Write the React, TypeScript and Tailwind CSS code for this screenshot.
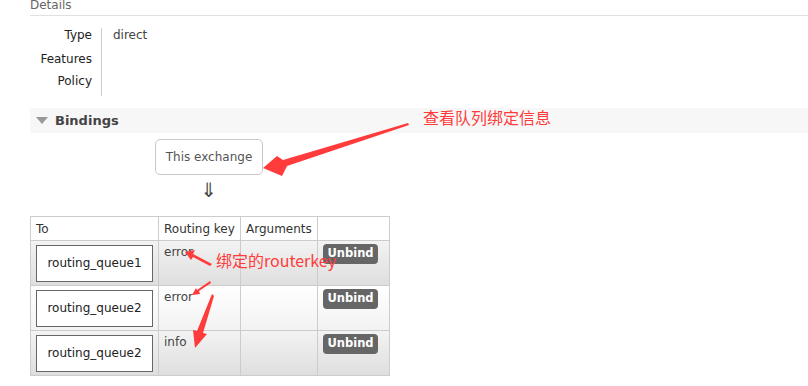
import React from 'react';

const rows = [
  { queue: 'routing_queue1', key: 'error', odd: true },
  { queue: 'routing_queue2', key: 'error', odd: false },
  { queue: 'routing_queue2', key: 'info', odd: true },
];

const Annotations: React.FC = () => (
  <svg className="absolute inset-0 pointer-events-none" width="808" height="386" viewBox="0 0 808 386">
    {/* big arrow to "This exchange" */}
    <polygon
      fill="#ff3b3b"
      points="408,123 409,125 287,166 282,176 263,168 277,156 283,160"
    />
    {/* arrow to first "error" */}
    <polygon fill="#ff3b3b" points="212,264 210,266 193,257 191,260 185,252 195,250 193,254" />
    {/* arrow to second "error" */}
    <polygon fill="#ff3b3b" points="210,281 211,283 199,291 200,294 192,295 196,288 197,290" />
    {/* arrow to "info" */}
    <polygon fill="#ff3b3b" points="212,294 214,296 203,333 207,334 195,348 193,330 197,331" />
    <text x="423" y="124" fill="#ff3b3b" fontSize="16" fontFamily="'Noto Sans CJK SC', sans-serif">
      查看队列绑定信息
    </text>
    <text x="216" y="267" fill="#ff3b3b" fontSize="16" fontFamily="'Noto Sans CJK SC', sans-serif">
      绑定的routerkey
    </text>
  </svg>
);

const App: React.FC = () => {
  return (
    <div className="relative w-[808px] h-[386px] overflow-hidden bg-white text-[12px] text-[#333] font-['DejaVu_Sans',sans-serif]">
      {/* Details header */}
      <div className="ml-[30px] h-[16px] border-b border-[#e0e0e0]">
        <div className="relative -top-[3px] leading-[16px] text-[#666]">Details</div>
      </div>

      {/* Details table */}
      <div className="flex mt-[12px]">
        <div className="w-[92px] text-right text-[#222]">
          <div className="h-[24px] leading-[14px]">Type</div>
          <div className="h-[22px] leading-[14px]">Features</div>
          <div className="h-[22px] leading-[14px]">Policy</div>
        </div>
        <div className="ml-[9px] h-[68px] border-l border-[#ccc] pl-[11px] text-[#444] leading-[14px]">direct</div>
      </div>

      {/* Bindings section bar */}
      <div className="ml-[30px] mt-[12px] h-[25px] bg-[#f7f7f7] flex items-center">
        <div className="ml-[6px] w-0 h-0 border-l-[6px] border-r-[6px] border-t-[7px] border-l-transparent border-r-transparent border-t-[#999]" />
        <span className="ml-[7px] font-bold text-[13px] text-[#444]">Bindings</span>
      </div>

      {/* This exchange */}
      <div className="ml-[155px] mt-[6px] w-[108px] h-[36px] border border-[#c8c8c8] rounded-[5px] flex items-center justify-center text-[#555]">
        This exchange
      </div>
      <div className="ml-[155px] w-[108px] text-center text-[20px] leading-[24px] text-[#444] mt-[3px]">⇓</div>

      {/* Bindings table */}
      <table className="ml-[30px] mt-[14px] border-collapse border border-[#ccc]">
        <thead>
          <tr className="h-[24px] bg-white">
            <th className="w-[128px] border border-[#ccc] px-[5px] text-left font-normal">To</th>
            <th className="w-[82px] border border-[#ccc] px-[5px] text-left font-normal">Routing key</th>
            <th className="w-[77px] border border-[#ccc] px-[5px] text-left font-normal">Arguments</th>
            <th className="w-[72px] border border-[#ccc]" />
          </tr>
        </thead>
        <tbody>
          {rows.map((r, i) => (
            <tr
              key={i}
              className={
                r.odd
                  ? 'h-[45px] bg-gradient-to-b from-[#f3f3f3] to-[#dedede]'
                  : 'h-[45px] bg-gradient-to-b from-[#ffffff] to-[#f2f2f2]'
              }
            >
              <td className="border border-[#ccc] px-[5px] align-middle">
                <div className="w-[117px] h-[37px] border border-[#666] bg-white flex items-center justify-center text-[#222]">
                  {r.queue}
                </div>
              </td>
              <td className="border border-[#ccc] px-[5px] pt-[2px] align-top text-[#444]">{r.key}</td>
              <td className="border border-[#ccc]" />
              <td className="border border-[#ccc] px-[5px] pt-[3px] align-top">
                <div className="w-[55px] h-[20px] rounded-[4px] bg-[#666] text-[11.5px] text-white font-bold flex items-center justify-center">
                  Unbind
                </div>
              </td>
            </tr>
          ))}
        </tbody>
      </table>

      <Annotations />
    </div>
  );
};

export default App;
